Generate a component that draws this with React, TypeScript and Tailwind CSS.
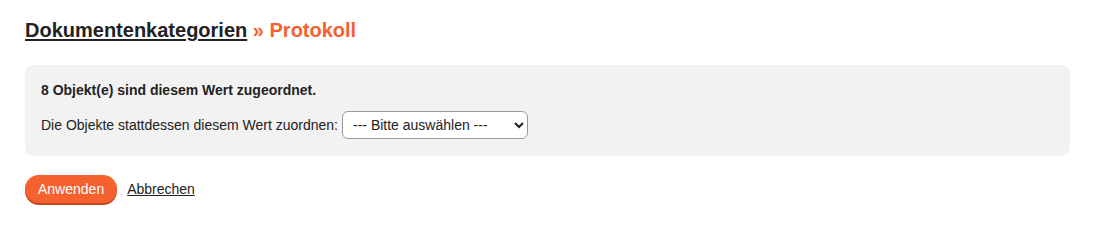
export default function App() {
  return (
    <div className="min-h-[227px] bg-white px-[25px] pt-[18px] text-[#222] font-['Liberation_Sans',Arial,sans-serif]">
      {/* Brotkrumen-Titel */}
      <h1 className="text-[20px] font-bold leading-[24px]">
        <a href="#" className="text-[#222] underline underline-offset-2">Dokumentenkategorien</a>
        <span className="text-[#f5612f]"> » Protokoll</span>
      </h1>

      <div className="mt-[23px] mr-[2px] rounded-[8px] bg-[#f2f2f2] px-[16px] pt-[16px] pb-[17px]">
        <p className="text-[14px] font-bold leading-[18px]">8 Objekt(e) sind diesem Wert zugeordnet.</p>
        <div className="mt-[12px] flex items-center gap-[4px] text-[14px]">
          <label htmlFor="target">Die Objekte stattdessen diesem Wert zuordnen:</label>
          <select
            id="target"
            className="h-[28px] w-[186px] rounded-[6px] border border-[#999] bg-white px-[6px] text-[14px] text-[#222]"
          >
            <option>--- Bitte auswählen ---</option>
          </select>
        </div>
      </div>

      <div className="mt-[19px] flex items-center gap-[10px]">
        <button
          type="button"
          className="h-[28px] rounded-full bg-[#f5612f] px-[13px] text-[14px] text-white shadow-[0_2px_0_#c9461c]"
        >
          Anwenden
        </button>
        <a href="#" className="text-[14px] text-[#222] underline">Abbrechen</a>
      </div>
    </div>
  );
}
